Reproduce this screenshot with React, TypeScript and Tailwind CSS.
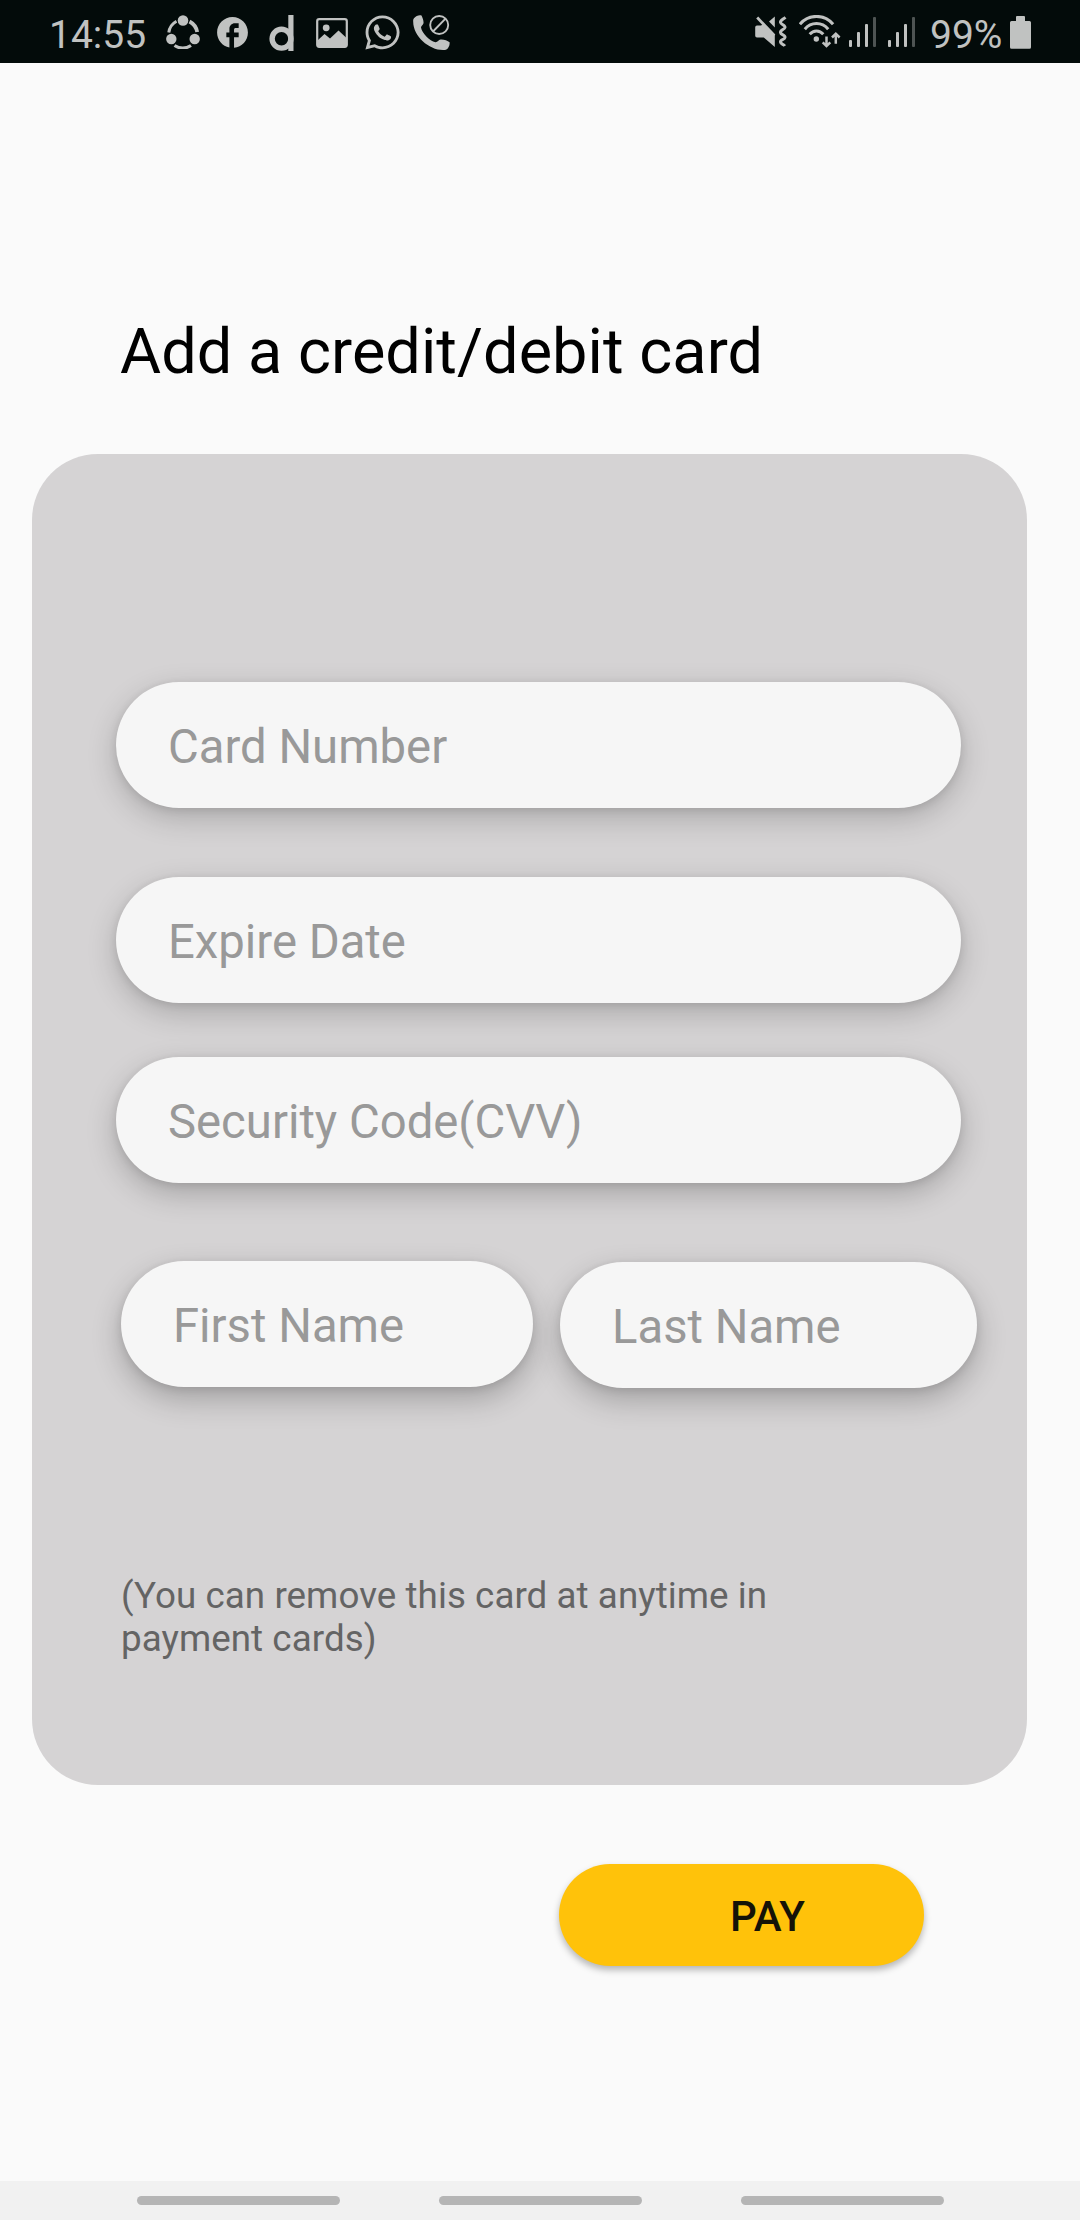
import React from "react";
import { MdFacebook } from "react-icons/md";
import { FaWhatsapp } from "react-icons/fa";

function ShareIcon() {
  return (
    <svg className="ml-[14px] h-[34px] w-[34px]" viewBox="0 0 34 34" fill="currentColor">
      <circle cx="17" cy="5.5" r="5.3" />
      <circle cx="5.3" cy="24" r="5.2" />
      <circle cx="28.7" cy="24" r="5.2" />
      <g fill="none" stroke="currentColor">
        <path d="M10.5 6.2A15 15 0 0 0 2.8 17.5" strokeWidth="3" />
        <path d="M23.5 6.5A15 15 0 0 1 31.2 17" strokeWidth="3.8" />
        <path d="M8.5 30.500A15.5 15.5 0 0 0 25 30.500" strokeWidth="3.2" />
      </g>
    </svg>
  );
}

function DIcon() {
  return (
    <svg className="mt-[3px] ml-[18px] h-[36px] w-[26px]" viewBox="0 0 26 36" fill="none" stroke="currentColor">
      <circle cx="12.5" cy="23.7" r="9.4" strokeWidth="5.4" />
      <rect x="19.3" y="0" width="5.2" height="36" fill="currentColor" stroke="none" />
    </svg>
  );
}

function ImageIcon() {
  return (
    <svg className="mt-[2px] ml-[21px] h-[30px] w-[32px]" viewBox="0 0 32 30" fill="none">
      <rect x="1.2" y="1.2" width="29.6" height="27.6" rx="2" stroke="currentColor" strokeWidth="2.2" />
      <circle cx="10.2" cy="9.8" r="3.4" fill="currentColor" />
      <path d="M2 22l6.5-6 5.5 4.5L22.500 12.500 30 19.500V28H2z" fill="currentColor" />
    </svg>
  );
}

function CallBlockedIcon() {
  return (
    <svg className="mt-[2px] ml-[11px] h-[36px] w-[37px]" viewBox="0 0 37 36" fill="none">
      <path
        d="M1 3.200C3 .8 6.500-.3 8.500.600 9.700 3 10.800 6 10.500 8.200 10 10 8 11 8 12.500 9 18 16.500 26 22.500 27.300 24.500 27.500 25.500 25 27.500 24.600 30.500 24.300 34.500 25.500 36.600 27.300 37 30 35.500 33.500 33 34.800 18 37 0 22 .2 6.500 0 5 .3 4 1 3.200z"
        fill="currentColor"
      />
      <circle cx="26.200" cy="10" r="9" stroke="currentColor" strokeWidth="1.900" />
      <path d="M20 16.500L32.500 3.700" stroke="currentColor" strokeWidth="1.900" />
    </svg>
  );
}

function MuteIcon() {
  return (
    <svg className="mt-px h-[32px] w-[32px]" viewBox="0 0 32 32" fill="none">
      <path d="M2 9.500H6L9 7.500 19.800 18.500V31L8.800 21.500H2Q.2 21.500.2 19.700V11.300Q.2 9.500 2 9.500z" fill="currentColor" />
      <path d="M19.800.500V11.500L14 5.500z" fill="currentColor" />
      <path d="M2.200 1.500L19.300 19.500" stroke="currentColor" strokeWidth="2.800" />
      <path d="M30.500 1.300C28 3.500 25 4.500 25.500 6.500S30.500 9.500 30 11.500 25.200 14 25.500 16.500 30.500 19 30 21.500 25.200 23.500 25.500 26 28.500 28 29.800 30" stroke="currentColor" strokeWidth="3" />
    </svg>
  );
}

function WifiIcon() {
  return (
    <svg className="ml-[12px] h-[34px] w-[42px]" viewBox="0 0 42 34" fill="none" stroke="currentColor">
      <g strokeWidth="3">
        <path d="M.9 9.200C9.500-1.200 25.500-1.200 34.100 9.200" />
        <path d="M5.800 14.200C12 6.700 23 6.700 29.200 14.200" />
        <path d="M10.700 19.200C14.500 14.800 20.500 14.800 24.300 19.200" />
      </g>
      <circle cx="17.300" cy="24" r="2.700" fill="currentColor" stroke="none" />
      <g strokeWidth="2.500">
        <path d="M27.500 21.500V31M23.700 27.300L27.500 31.100 31.300 27.300" />
        <path d="M36.800 28.800V19M33 22.500L36.800 18.700 40.600 22.500" />
      </g>
    </svg>
  );
}

function SignalBars({ gap }: { gap: string }) {
  return (
    <div className={`mt-px flex h-[30px] w-[27px] items-end justify-between ${gap}`}>
      <i className="h-[7px] w-[3px] rounded-[1px] bg-current" />
      <i className="h-[15px] w-[3px] rounded-[1px] bg-current" />
      <i className="h-[23px] w-[3px] rounded-[1px] bg-current" />
      <i className="h-[30px] w-[3px] rounded-[1px] bg-current opacity-40" />
    </div>
  );
}

function BatteryIcon() {
  return (
    <svg className="mt-[2px] ml-[8px] h-[33px] w-[21px]" viewBox="0 0 21 33" fill="currentColor">
      <path d="M6 1Q6 0 7 0H14Q15 0 15 1V5H19.500Q21 5 21 6.500V31.200Q21 32.700 19.500 32.700H1.500Q0 32.700 0 31.200V6.500Q0 5 1.500 5H6z" />
    </svg>
  );
}

function StatusBar() {
  return (
    <header className="flex h-[63px] items-center bg-[#030b0a] pr-[49px] pl-[49px] text-[#c0c2c1]">
      <span className="mt-[7px] w-[103px] text-[39px] leading-none whitespace-nowrap">14:55</span>
      <ShareIcon />
      <MdFacebook className="mt-[2px] ml-[14px] size-[37px]" />
      <DIcon />
      <ImageIcon />
      <FaWhatsapp className="mt-[2px] ml-[15px] size-[39px]" />
      <CallBlockedIcon />
      <div className="ml-auto flex items-center">
        <MuteIcon />
        <WifiIcon />
        <SignalBars gap="ml-[8px]" />
        <SignalBars gap="ml-[12px]" />
        <span className="mt-[7px] ml-[15px] w-[72px] text-[39px] leading-none whitespace-nowrap">99%</span>
        <BatteryIcon />
      </div>
    </header>
  );
}

function Field({ label, className }: { label: string; className: string }) {
  return (
    <div
      className={`flex h-[126px] items-center rounded-full bg-[#f6f6f6] pt-[5px] pl-[52px] text-[47.25px] whitespace-nowrap text-[#999999] ${className}`}
    >
      {label}
    </div>
  );
}

export default function App() {
  return (
    <div className="flex h-[2220px] w-[1080px] flex-col bg-[#fafafa] font-['Roboto',sans-serif]">
      <StatusBar />
      <h1 className="mt-[252px] ml-[120px] text-[63px] leading-[74px] tracking-[0.06px] whitespace-nowrap text-black">
        Add a credit/debit card
      </h1>
      <main className="mt-[65px] ml-[32px] flex h-[1331px] w-[995px] flex-col rounded-[66px] bg-[#d5d3d4] pt-[228px] pl-[84px]">
        <Field label="Card Number" className="w-[845px] shadow-[0_10px_30px_rgba(0,0,0,0.2),0_2px_8px_rgba(0,0,0,0.1)]" />
        <Field label="Expire Date" className="mt-[69px] w-[845px] shadow-[0_10px_30px_rgba(0,0,0,0.2),0_2px_8px_rgba(0,0,0,0.1)]" />
        <Field label="Security Code(CVV)" className="mt-[54px] w-[845px] shadow-[0_11px_30px_rgba(0,0,0,0.22),0_2px_8px_rgba(0,0,0,0.1)]" />
        <div className="mt-[78px] ml-[5px] flex gap-[27px]">
          <Field label="First Name" className="w-[412px] shadow-[0_12px_30px_rgba(0,0,0,0.24),0_2px_8px_rgba(0,0,0,0.1)]" />
          <Field label="Last Name" className="mt-px w-[417px] shadow-[0_12px_30px_rgba(0,0,0,0.24),0_2px_8px_rgba(0,0,0,0.1)]" />
        </div>
        <p className="mt-[186px] ml-[5px] w-[700px] text-[36.75px] leading-[43px] tracking-[0.06px] text-[#646464]">
          (You can remove this card at anytime in
          <br />
          payment cards)
        </p>
      </main>
      <button className="mt-[79px] ml-[559px] flex h-[102px] w-[365px] items-center rounded-full bg-[#ffc20a] pt-[2px] pl-[171px] text-[42px] font-medium text-[#151307] shadow-[0_4px_7px_rgba(0,0,0,0.28)]">
        PAY
      </button>
      <nav className="mt-auto flex h-[39px] items-center justify-center gap-[99px] bg-[#f1f1f1]">
        <i className="h-[9px] w-[203px] rounded-full bg-[#b5b5b5]" />
        <i className="h-[9px] w-[203px] rounded-full bg-[#b5b5b5]" />
        <i className="h-[9px] w-[203px] rounded-full bg-[#b5b5b5]" />
      </nav>
    </div>
  );
}
